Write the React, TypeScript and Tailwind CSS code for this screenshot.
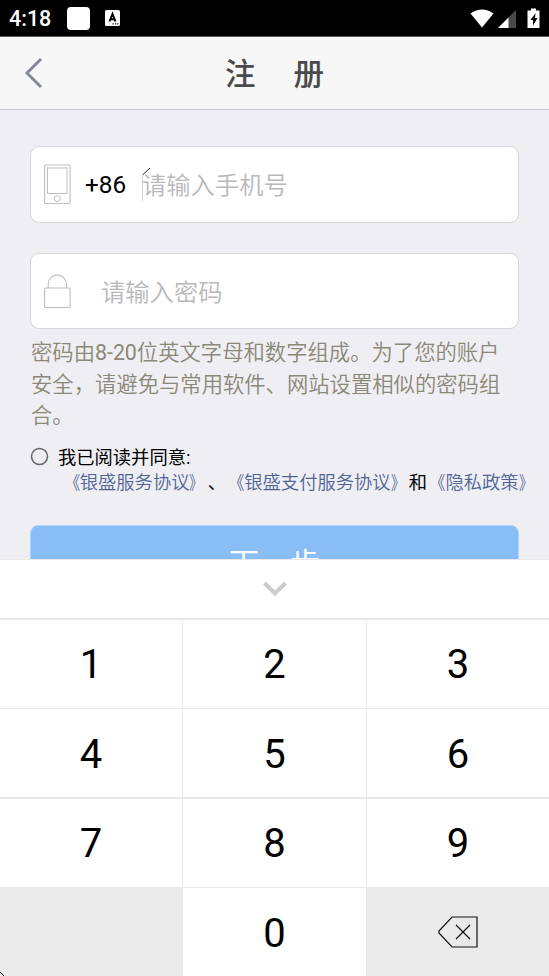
import React from 'react';

const cjk = "font-[Roboto,'Noto_Sans_CJK_SC',sans-serif]";

function StatusBar() {
  return (
    <div className="flex h-[37px] shrink-0 items-center justify-between border-b border-[#606060] bg-black pl-[9px] pr-[9px] text-white">
      <div className="flex items-center">
        <span className="w-[58px] pt-[2px] text-[21.5px] leading-[36px] font-medium">4:18</span>
        <span className="h-[23px] w-[23px] rounded-[4px] bg-white" />
        <svg className="ml-[15px]" width="15" height="16" viewBox="0 0 15 16">
          <rect width="15" height="16" rx="1.5" fill="#fff" />
          <path d="M4.5 11.5 7.5 4l3 7.5M5.5 9.3h4" stroke="#000" strokeWidth="2" fill="none" />
          <path d="M7.5 13.8h1.2M10 13.8h1.2M12.3 13.8h1.2" stroke="#000" strokeWidth="1.2" />
        </svg>
      </div>
      <svg className="mt-[1px]" width="70" height="22" viewBox="0 0 70 22">
        <path d="M0.5 5.5Q12 -2.5 23.5 5.5L12 19.5Z" fill="#fff" />
        <path d="M46 2V20H28Z" fill="#4a4a4a" />
        <path d="M38.5 9.5V20H28Z" fill="#fff" />
        <path d="M61 0.5h5v2h3.5V20h-12V2.500H61Z" fill="#fff" />
        <path d="M65.500 5 60.500 12h2.500v5.500L67.500 10H65Z" fill="#000" />
      </svg>
    </div>
  );
}

function PhoneIcon() {
  return (
    <svg width="27" height="41" viewBox="0 0 27 41" fill="none" stroke="#bdbdbf">
      <rect x="0.6" y="1" width="25.500" height="38.500" rx="1.500" strokeWidth="1.1" />
      <rect x="3.500" y="4" width="19.500" height="25.500" />
      <circle cx="13.200" cy="34.600" r="3" />
    </svg>
  );
}

function LockIcon() {
  return (
    <svg width="27" height="35" viewBox="0 0 27 35" fill="none" stroke="#bdbdbf" strokeWidth="1.1">
      <rect x="0.6" y="14" width="25.500" height="19.500" rx="1.500" />
      <path d="M4.200 14V10a9.100 9.100 0 0 1 18.200 0v4" />
    </svg>
  );
}

function Agreement({ title }: { title: string }) {
  return (
    <span className="font-[350] text-[#506596]">
      <span className="inline-block origin-right scale-x-[0.85]">《</span>
      {title}
      <span className="inline-block origin-left scale-x-[0.75]">》</span>
    </span>
  );
}

function Key({ label }: { label: string }) {
  return (
    <div className="flex items-center justify-center bg-white pt-[3px] text-[40px] leading-none text-black">{label}</div>
  );
}

export default function App() {
  return (
    <div className={`${cjk} flex h-[976px] w-[549px] flex-col overflow-hidden bg-[#efeef3]`}>
      <StatusBar />
      <header className="relative flex h-[73px] shrink-0 items-center justify-center border-b border-[#c8c8cb] bg-[#f7f7f7]">
        <svg className="absolute left-[24px] top-[20px]" width="20" height="32" viewBox="0 0 20 32">
          <path d="M17 2 3 16 17 30" fill="none" stroke="#858b96" strokeWidth="3" />
        </svg>
        <h1 className="flex gap-[38px] pt-[4px] text-[30.500px] leading-none font-medium text-[#4a4a4a]">
          <span>注</span>
          <span>册</span>
        </h1>
      </header>

      <main className="h-[449px] shrink-0 overflow-hidden px-[30px] pt-[36px]">
        <div className="flex h-[77px] w-[489px] items-center rounded-[9px] border-[1.500px] border-[#d6d6d8] bg-white pl-[13px]">
          <PhoneIcon />
          <span className="ml-[14px] w-[57px] pt-[2px] text-[24.300px] text-black">+86</span>
          <span className="relative pt-[4px] text-[24.300px] font-[350] text-[#b8b8bc]">
            请输入手机号
            <svg className="absolute left-0 top-[3px]" width="9" height="36" viewBox="0 0 9 36" fill="none">
              <path d="M0.500 9v25" stroke="#cfcfcf" />
              <path d="M0.500 8 8 1" stroke="#222" />
            </svg>
          </span>
        </div>
        <div className="mt-[30px] flex h-[76px] w-[489px] items-center rounded-[9px] border-[1.500px] border-[#d6d6d8] bg-white pl-[13px]">
          <LockIcon />
          <span className="ml-[30px] pt-[5px] text-[24.300px] font-[350] text-[#b8b8bc]">请输入密码</span>
        </div>
        <p className="ml-[1px] mt-[8px] w-[480px] text-[21.330px] leading-[31.500px] font-[350] text-[#8a8878]">
          密码由<span className="font-normal">8-20</span>位英文字母和数字组成。为了您的账户
          <br />
          安全，请避免与常用软件、网站设置相似的密码组
          <br />
          合。
        </p>
        <div className="mt-[13px] flex h-[25px] items-center text-[18.300px] text-black">
          <svg className="-mt-[2px]" width="19" height="19" viewBox="0 0 19 19">
            <circle cx="9.500" cy="9.500" r="8" fill="none" stroke="#666" strokeWidth="1.500" />
          </svg>
          <span className="ml-[9px] pt-[2px]">我已阅读并同意:</span>
        </div>
        <div className="ml-[31.500px] flex h-[25px] items-center whitespace-nowrap pt-[2px] text-[18.300px] text-black">
          <Agreement title="银盛服务协议" />、
          <Agreement title="银盛支付服务协议" />和
          <Agreement title="隐私政策" />
        </div>
        <div className="mt-[30px] flex h-[77px] w-[489px] items-center justify-center gap-[31px] rounded-[8px] border border-[#b3d3f6] bg-[#88bdf6] text-[30px] text-white">
          <span>下</span>
          <span>步</span>
        </div>
      </main>

      <section className="relative flex h-[417px] shrink-0 flex-col bg-white">
        <div className="flex h-[59px] shrink-0 items-center justify-center border-t border-[#e8e8e8]">
          <svg width="24" height="16" viewBox="0 0 24 16">
            <path d="M1.500 2 12 12.500 22.500 2" fill="none" stroke="#cccccc" strokeWidth="4" />
          </svg>
        </div>
        <div className="grid h-[358px] grid-cols-[182px_183px_182px] grid-rows-[88px_88px_88px_88px] gap-x-[1px] gap-y-[1.500px] bg-[#e9e9e9] pt-[1.500px]">
          {['1', '2', '3', '4', '5', '6', '7', '8', '9'].map((n) => (
            <Key key={n} label={n} />
          ))}
          <div className="bg-[#eaeaea]" />
          <Key label="0" />
          <div className="flex items-center justify-center bg-[#eaeaea]">
            <svg width="40" height="32" viewBox="0 0 40 32" fill="none" stroke="#111" strokeWidth="1.200">
              <path d="M14 1H39V31H14L1 17V15Z" />
              <path d="M18 9 32 23M32 9 18 23" />
            </svg>
          </div>
        </div>
        <svg className="absolute bottom-0 left-0" width="4" height="4" viewBox="0 0 4 4">
          <path d="M0 0 4 4" stroke="#000" />
        </svg>
      </section>
    </div>
  );
}
